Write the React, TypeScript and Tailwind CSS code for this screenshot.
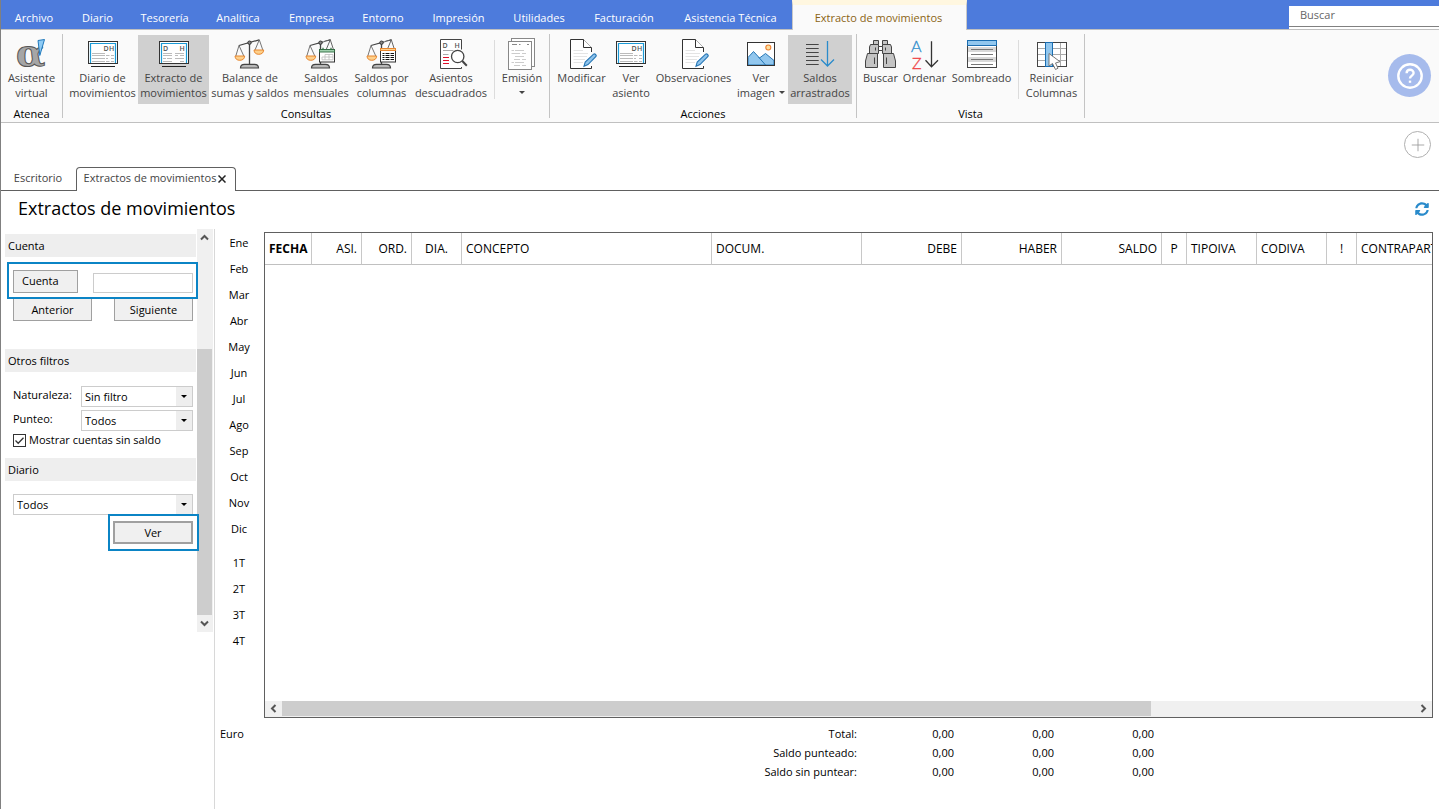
import { useState } from 'react';
import type { ReactNode } from 'react';
import { Plus } from 'lucide-react';
import { FaSyncAlt } from 'react-icons/fa';

const Icon = ({ children }: { children: ReactNode }) => (
  <svg className="w-8 h-8 shrink-0 overflow-visible" viewBox="0 -1 32 32" fill="none" aria-hidden="true">
    {children}
  </svg>
);

const Screen = ({ children }: { children: ReactNode }) => (
  <Icon>
    <rect x="1.5" y="2.5" width="29" height="22" fill="#fff" stroke="#333" strokeWidth="1" />
    <path d="M3.5 24V4.5H28.5V24" stroke="#1a9ad6" strokeWidth="1.2" />
    <path d="M4 27.5H28" stroke="#222" strokeWidth="1" />
    {children}
  </Icon>
);

const JournalIcon = () => (
  <Screen>
    <text x="16.5" y="12" fontSize="7" fontWeight="600" fill="#555">D</text>
    <text x="22" y="12" fontSize="7" fontWeight="600" fill="#555">H</text>
    <path d="M5 14.5H18M5 16.5H18M5 19.5H18M5 22.5H18M19 16.5H22.5M19 22.5H22.5M24 19.5H27M19 19.5H21M24 16.5H27M24 22.5H27" stroke="#bbb" />
  </Screen>
);

const ExtractIcon = () => (
  <Screen>
    <text x="5" y="12" fontSize="7" fontWeight="600" fill="#555">D</text>
    <text x="21.5" y="12" fontSize="7" fontWeight="600" fill="#555">H</text>
    <path d="M5 14.5H14M5 16.5H14M5 19.5H8M9 19.5H14M5 22.5H14M17 14.5H26M17 16.5H20M22 16.5H26M17 19.5H26M22 22.5H26" stroke="#bbb" />
  </Screen>
);

const Scale = ({ children }: { children?: ReactNode }) => (
  <Icon>
    <path d="M15.5 5V25" stroke="#444" strokeWidth="1.3" />
    <path d="M5 6.5L25.3 .8" stroke="#444" strokeWidth="1.2" />
    <path d="M5 6.5L1.8 17M5 6.5L9.8 17M25.3 .8L21 11M25.3 .8L28.8 11" stroke="#666" strokeWidth=".9" />
    <circle cx="15.5" cy="3.7" r="1.7" fill="#888" stroke="#333" />
    <path d="M1 17H10.7C10.5 19.8 8.8 21.3 5.8 21.3S1.2 19.8 1 17Z" fill="#fdd08b" stroke="#e8862e" />
    <path d="M20 11H29.7C29.5 13.8 27.8 15.3 24.8 15.3S20.2 13.8 20 11Z" fill="#fdd08b" stroke="#e8862e" />
    <path d="M6.5 29C6.5 26.5 8 25.3 10.5 25.3H20.5C23 25.3 24.5 26.5 24.5 29Z" fill="#b9b9b9" stroke="#444" strokeWidth="1.2" />
    {children}
  </Icon>
);

const CalendarScaleIcon = () => (
  <Scale>
    <path d="M18 9V2H30V18H18Z" fill="#fafafa" />
    <path d="M18 3L25.3 .8M25.3 .8L21 11M25.3 .8L28.3 10" stroke="#666" />
    <rect x="14.5" y="10.5" width="15" height="12.5" fill="#fff" stroke="#333" />
    <rect x="14.5" y="10.5" width="15" height="2.5" fill="#9fd0ad" stroke="#2f6b40" strokeWidth=".9" />
    <path d="M18 8.8V11M26 8.8V11" stroke="#2f6b40" strokeWidth="1.2" />
    <path d="M20 15.5H28M17 18H28M17 20.8H28M17 18V20.8M20 15.5V20.8M24 15.5V20.8M28 15.5V20.8" stroke="#bbb" strokeWidth=".8" />
  </Scale>
);

const ColumnsScaleIcon = () => (
  <Scale>
    <path d="M18 9V2H30V18H18Z" fill="#fafafa" />
    <path d="M18 3L25.3 .8M25.3 .8L21.5 10M25.3 .8L28.3 10" stroke="#666" />
    <rect x="14.5" y="9.5" width="15" height="13.5" fill="#fff" stroke="#333" />
    <rect x="14.5" y="9.5" width="15" height="2" fill="#fdd08b" stroke="#e8862e" />
    <path d="M16.5 14.5H18.5M16.5 16.5H18.5M16.5 18.5H18.5M16.5 20.5H18.5M19.5 14.5H23.5M19.5 16.5H23.5M19.5 18.5H23.5M19.5 20.5H23.5M24.5 14.5H28M24.5 16.5H28M24.5 18.5H28M24.5 20.5H28" stroke="#111" />
  </Scale>
);

const UnbalancedIcon = () => (
  <Icon>
    <path d="M26.5 10.5V.5H5.5V29.5H26.5V28" fill="#fff" stroke="#444" />
    <text x="7.5" y="8.5" fontSize="7" fontWeight="600" fill="#555">D</text>
    <text x="19.5" y="8.5" fontSize="7" fontWeight="600" fill="#555">H</text>
    <path d="M8 11.5H18.5M8 15.5H13.5" stroke="#aaa" />
    <path d="M8 18.5H14M8 21.5H14M8 24.5H14" stroke="#e0112b" />
    <circle cx="22.7" cy="17.5" r="6.2" fill="#fff" stroke="#444" strokeWidth="1.3" />
    <path d="M27.3 22L31.8 26.8" stroke="#444" strokeWidth="2" />
  </Icon>
);

const PrintIcon = () => (
  <Icon>
    <rect x="5.5" y="-.5" width="23" height="28" fill="#fff" stroke="#888" />
    <rect x="2.5" y="2.5" width="23" height="28" fill="#fff" stroke="#888" />
    <path d="M6 5.5H11M13 5.5H14.5M21 5.5H23" stroke="#888" />
    <path d="M5.5 11.5H8M9 11.5H18M5.5 14.5H14M16 14.5H20M9 17.5H18M8 20.5H14M16 20.5H20M5.5 23.5H8M9 23.5H18M8 26.5H14M16 26.5H20" stroke="#ccc" />
  </Icon>
);

const EditIcon = () => (
  <Icon>
    <path d="M25.5 13V8.7L17.3.5H4.5V29.5H25.5V27" fill="#fff" stroke="#333" />
    <path d="M17.5.5V8.5H25.5" fill="#fff" stroke="#333" />
    <path d="M7.5 11.5H17M7.5 14.5H22M7.5 17.5H21M7.5 20.5H19M7.5 23.5H17" stroke="#e4e4e4" />
    <path d="M18 27.2L19.2 23L27.6 15.2C28.8 14.2 31 16.2 30 17.5L22 25.6Z" fill="#8fc4ec" stroke="#2676b5" strokeWidth="1.1" />
  </Icon>
);

const ImageIcon = () => (
  <Icon>
    <rect x="2.5" y="3.5" width="27" height="23" fill="#fff" />
    <path d="M3 18.5L8.5 12.5L14.5 19L20.5 14.5L29 21.5V26H3Z" fill="#92c7ee" stroke="#2676b5" />
    <path d="M13.5 18L20.5 26" stroke="#2676b5" />
    <rect x="2.5" y="3.5" width="27" height="23" stroke="#333" />
    <circle cx="23.3" cy="8.5" r="2.5" fill="#fde0a0" stroke="#ee8130" strokeWidth="1.1" />
  </Icon>
);

const CarryIcon = () => (
  <Icon>
    <path d="M2 5.5H14.7M2 9.5H14.7M2 13.5H14.7M2 17.5H14.7M2 21.5H14.7M2 25.5H14.7" stroke="#444" />
    <path d="M23.5 2V27.3M17 20.5L23.5 27L30 20.5" stroke="#2a8bcb" strokeWidth="1.3" />
  </Icon>
);

const BinocularsIcon = () => (
  <Icon>
    <g fill="#c4c4c4" stroke="#444">
      <path d="M8.5 1.5H13.5V5.5H8.5ZM17.5 1.5H22.5V5.5H17.5Z" />
      <path d="M5.5 5.5H13.5V14.5H4.5V8Z" />
      <path d="M17.5 5.5H25.5L26.5 8V14.5H17.5Z" />
      <path d="M13.5 7.5H17.5V11.5H13.5Z" fill="#fff" />
      <path d="M2.5 14.5H12.5V28.5H.5V22Z" />
      <path d="M18.5 14.5H28.5L30.5 22V28.5H18.5Z" />
      <path d="M9.5 18.5V25M21.5 18.5V25M10.5 8.5V11.5M20.5 8.5V11.5" />
    </g>
  </Icon>
);

const SortIcon = () => (
  <Icon>
    <g className="font-['Lato'] font-light">
      <text x="2" y="12.5" fontSize="16" fill="#2a8bcb" stroke="#2a8bcb" strokeWidth=".3">A</text>
      <text x="3" y="29.5" fontSize="16" fill="#ef3e42" stroke="#ef3e42" strokeWidth=".3">Z</text>
    </g>
    <path d="M22.5 2.3V27.8M16.5 21.3L22.5 27.7L29 21.3" stroke="#333" strokeWidth="1.3" />
  </Icon>
);

const ShadeIcon = () => (
  <Icon>
    <rect x="1.5" y="1.5" width="29" height="27" fill="#fff" stroke="#444" />
    <path d="M2 8H30V13H2ZM2 18H30V23H2Z" fill="#d9d9d9" />
    <path d="M5 10.5H27M5 15.5H27M5 20.5H27M5 25.5H27" stroke="#777" />
    <rect x="1.5" y="1.5" width="29" height="5" fill="#92c7ee" stroke="#1b6db0" />
  </Icon>
);

const ResetColumnsIcon = () => (
  <Icon>
    <rect x="1.5" y="3.5" width="29" height="24" fill="#fff" stroke="#444" />
    <path d="M2 9.5H30M2 15.5H30M2 21.5H30M24.5 4V27" stroke="#aaa" />
    <rect x="9.5" y="3.5" width="7" height="24" fill="#92c7ee" stroke="#1b6db0" />
    <path d="M13 14.5L13 27L16.5 24.5L19.5 30.5L22 29.2L19.5 24L24 22.7Z" fill="#fff" stroke="#777" />
  </Icon>
);

const AlphaIcon = () => (
  <Icon>
    <text x="0" y="27" fontSize="38" fill="#a6a6a6" stroke="#555" className="font-['DejaVu_Serif'] font-bold">α</text>
    <path d="M22 1.5L28.5 .5L23.8 16.5Z" fill="#8ecbf5" stroke="#1f78bb" />
  </Icon>
);

type Tool = {
  icon: () => ReactNode;
  lines: string[];
  width: string;
  active?: boolean;
  menu?: boolean;
  split?: boolean;
};

const groups: { name: string; tools: Tool[] }[] = [
  { name: 'Atenea', tools: [{ icon: AlphaIcon, lines: ['Asistente', 'virtual'], width: 'w-[53px]' }] },
  {
    name: 'Consultas',
    tools: [
      { icon: JournalIcon, lines: ['Diario de', 'movimientos'], width: 'w-[71px]' },
      { icon: ExtractIcon, lines: ['Extracto de', 'movimientos'], width: 'w-[71px]', active: true },
      { icon: Scale, lines: ['Balance de', 'sumas y saldos'], width: 'w-[82px]' },
      { icon: CalendarScaleIcon, lines: ['Saldos', 'mensuales'], width: 'w-[60px]' },
      { icon: ColumnsScaleIcon, lines: ['Saldos por', 'columnas'], width: 'w-[61px]' },
      { icon: UnbalancedIcon, lines: ['Asientos', 'descuadrados'], width: 'w-[78px]' },
      { icon: PrintIcon, lines: ['Emisión', ''], width: 'w-[46px]', menu: true, split: true },
    ],
  },
  {
    name: 'Acciones',
    tools: [
      { icon: EditIcon, lines: ['Modificar'], width: 'w-[55px]' },
      { icon: JournalIcon, lines: ['Ver', 'asiento'], width: 'w-[44px]' },
      { icon: EditIcon, lines: ['Observaciones'], width: 'w-[81px]' },
      { icon: ImageIcon, lines: ['Ver', 'imagen'], width: 'w-[54px]', menu: true },
      { icon: CarryIcon, lines: ['Saldos', 'arrastrados'], width: 'w-[64px]', active: true },
    ],
  },
  {
    name: 'Vista',
    tools: [
      { icon: BinocularsIcon, lines: ['Buscar'], width: 'w-[39px]' },
      { icon: SortIcon, lines: ['Ordenar'], width: 'w-[49px]' },
      { icon: ShadeIcon, lines: ['Sombreado'], width: 'w-[65px]' },
      { icon: ResetColumnsIcon, lines: ['Reiniciar', 'Columnas'], width: 'w-[57px]', split: true },
    ],
  },
];

const menus = [
  { label: 'Archivo', width: 'w-[66px]' },
  { label: 'Diario', width: 'w-[61px]' },
  { label: 'Tesorería', width: 'w-[73px]' },
  { label: 'Analítica', width: 'w-[74px]' },
  { label: 'Empresa', width: 'w-[73px]' },
  { label: 'Entorno', width: 'w-[70px]' },
  { label: 'Impresión', width: 'w-[81px]' },
  { label: 'Utilidades', width: 'w-[80px]' },
  { label: 'Facturación', width: 'w-[90px]' },
  { label: 'Asistencia Técnica', width: 'w-[123px]' },
];

const columns = [
  { label: 'FECHA', style: 'w-[47px] font-bold text-center' },
  { label: 'ASI.', style: 'w-[50px] text-right' },
  { label: 'ORD.', style: 'w-[50px] text-right' },
  { label: 'DIA.', style: 'w-[50px] text-center' },
  { label: 'CONCEPTO', style: 'w-[250px] text-left' },
  { label: 'DOCUM.', style: 'w-[150px] text-left' },
  { label: 'DEBE', style: 'w-[100px] text-right' },
  { label: 'HABER', style: 'w-[100px] text-right' },
  { label: 'SALDO', style: 'w-[100px] text-right' },
  { label: 'P', style: 'w-[25px] text-center' },
  { label: 'TIPOIVA', style: 'w-[70px] text-left' },
  { label: 'CODIVA', style: 'w-[70px] text-left' },
  { label: '!', style: 'w-[30px] text-center' },
  { label: 'CONTRAPART', style: 'text-left' },
];

const months = ['Ene', 'Feb', 'Mar', 'Abr', 'May', 'Jun', 'Jul', 'Ago', 'Sep', 'Oct', 'Nov', 'Dic'];
const quarters = ['1T', '2T', '3T', '4T'];
const totals = ['Total:', 'Saldo punteado:', 'Saldo sin puntear:'];

const Caret = () => <span className="border-x-[3px] border-x-transparent border-t-[3px] border-t-current" />;

const Chevron = ({ d }: { d: string }) => (
  <svg className="w-[9px] h-[9px]" viewBox="0 0 9 9" fill="none" stroke="#555" strokeWidth="2" aria-hidden="true">
    <path d={d} />
  </svg>
);

const ToolButton = ({ tool }: { tool: Tool }) => (
  <>
    {tool.split && <span className="w-px h-[59px] mt-[5px] mx-1 bg-[#dcdcdc]" />}
    <button
      type="button"
      className={`${tool.width} h-[69px] pt-[3px] flex flex-col items-center leading-[15px] whitespace-nowrap text-[#444] ${
        tool.active ? 'bg-[#d0d0d0]' : ''
      }`}
    >
      <tool.icon />
      {tool.lines.map((line, i) => (
        <span key={i} className="h-[15px] flex items-center gap-1">
          {line}
          {tool.menu && i === tool.lines.length - 1 && <Caret />}
        </span>
      ))}
    </button>
  </>
);

const SectionTitle = ({ children }: { children: ReactNode }) => (
  <h2 className="h-[23px] mr-px pt-px pl-[3px] bg-[#eee] flex items-center">{children}</h2>
);

const Select = ({ id, value, label }: { id: string; value: string; label?: string }) => (
  <div className="relative flex-1 h-[21px]">
    <select
      id={id}
      aria-label={label}
      className="appearance-none w-full h-full pt-px pl-[3px] bg-white border border-[#ccc] rounded-none"
    >
      <option>{value}</option>
    </select>
    <span className="absolute right-px inset-y-px w-4 flex items-center justify-center bg-[#eee] pointer-events-none">
      <Caret />
    </span>
  </div>
);

const grayButton = 'h-[23px] pt-px bg-[#f0f0f0] border border-[#a0a0a0] flex items-center justify-center';

const App = () => {
  const [showEmpty, setShowEmpty] = useState(true);

  return (
    <div className="min-h-screen flex flex-col border-l border-[#808080] bg-white text-black text-[11px] font-['Open_Sans','Noto_Sans',sans-serif]">
      {/* Menu bar */}
      <header className="h-[30px] flex bg-[#4d7bdc] border-b border-[#c0c0c0]">
        <nav className="flex h-full">
          {menus.map((menu) => (
            <a
              key={menu.label}
              href="#"
              className={`${menu.width} pt-[7px] flex items-center justify-center whitespace-nowrap text-white`}
            >
              {menu.label}
            </a>
          ))}
          <a
            href="#"
            className="w-[175px] h-[30px] pt-px pr-[2px] border-t-[5px] border-t-[#fff7e0] border-x border-x-[#c8c8c8] bg-[#fafafa] flex items-center justify-center whitespace-nowrap text-[#8a6414]"
          >
            Extracto de movimientos
          </a>
        </nav>
        <div className="ml-auto pt-[6px]">
          <div className="w-[150px] h-[23px] bg-white">
            <input
              type="text"
              aria-label="Buscar"
              placeholder="Buscar"
              className="block w-full h-[21px] pl-[11px] pb-[3px] border-b border-[#808080] outline-none placeholder:text-[#666]"
            />
          </div>
        </div>
      </header>

      {/* Ribbon */}
      <div className="h-[93px] flex bg-[#fafafa] border-b border-[#c0c0c0]">
        {groups.map((group) => (
          <section key={group.name} className="flex">
            <div className="pt-[5px] px-1 flex flex-col">
              <div className="flex">
                {group.tools.map((tool, i) => (
                  <ToolButton key={i} tool={tool} />
                ))}
              </div>
              <h2 className="h-5 pt-[2px] flex items-center justify-center">{group.name}</h2>
            </div>
            <span className="w-px h-[84px] mt-1 bg-[#c4c4c4]" />
          </section>
        ))}
        <button
          type="button"
          aria-label="Ayuda"
          className="ml-auto mr-2 mt-6 w-[43px] h-[43px] rounded-full bg-[#a6bbec] flex items-center justify-center"
        >
          <svg className="w-[26px] h-[26px]" viewBox="0 0 26 26" fill="none" stroke="#fff" strokeWidth="2.4" aria-hidden="true">
            <circle cx="13" cy="13" r="11.7" />
            <path d="M9.6 10.3C9.6 5.6 16.6 5.8 16.6 10C16.6 12.6 13 12.6 13 15.5" />
            <path d="M13 17.6V19.8" />
          </svg>
        </button>
      </div>

      {/* Open windows */}
      <div className="h-[68px] pt-2 flex flex-col justify-between border-b border-[#606060]">
        <button
          type="button"
          aria-label="Nueva pestaña"
          className="self-end mr-2 w-[27px] h-[27px] rounded-full border border-[#b0b0b0] text-[#999] flex items-center justify-center"
        >
          <Plus className="w-5 h-5" strokeWidth={1} />
        </button>
        <div className="flex h-6 -mb-px text-[#444]">
          <a href="#" className="w-[75px] pb-px pr-px flex items-center justify-center">Escritorio</a>
          <div className="w-[160px] pb-[2px] pr-[2px] border border-b-0 border-[#606060] rounded-t-[4px] bg-white flex items-center justify-center gap-[2px] whitespace-nowrap">
            <a href="#">Extractos de movimientos</a>
            <button type="button" aria-label="Cerrar" className="text-[#222]">
              <svg className="w-2 h-2" viewBox="0 0 8 8" stroke="currentColor" strokeWidth="1.5" aria-hidden="true">
                <path d="M.5 .5L7.5 7.5M7.5 .5L.5 7.5" />
              </svg>
            </button>
          </div>
        </div>
      </div>

      <div className="h-[38px] pb-[2px] pl-[17px] pr-[10px] flex items-center justify-between">
        <h1 className="pb-[2px] text-[18px] leading-6">Extractos de movimientos</h1>
        <button type="button" aria-label="Actualizar" className="text-[#2a8bcb]">
          <FaSyncAlt className="w-[14px] h-[14px]" />
        </button>
      </div>

      <main className="flex-1 flex">
        {/* Filters */}
        <aside className="w-[214px] shrink-0 flex items-start border-r border-[#d8d8d8]">
          <form className="w-[192px] ml-1 pt-[5px]" onSubmit={(e) => e.preventDefault()}>
            <SectionTitle>Cuenta</SectionTitle>
            <div className="relative h-[37px] mt-[5px] ml-[2px] -mr-px pt-px pl-1 pr-[3px] border-2 border-[#0b84c5] bg-white flex items-center justify-between">
              <button type="button" className="w-[65px] h-[23px] pt-px pl-2 bg-[#f0f0f0] border border-[#a0a0a0] text-left">
                Cuenta
              </button>
              <input type="text" aria-label="Cuenta" className="w-[100px] h-5 mt-1 px-1 border border-[#ccc] outline-none" />
            </div>
            <div className="-mt-px ml-2 mr-1 flex justify-between">
              <button type="button" className={`w-[79px] ${grayButton}`}>Anterior</button>
              <button type="button" className={`w-[79px] ${grayButton}`}>Siguiente</button>
            </div>

            <div className="mt-7">
              <SectionTitle>Otros filtros</SectionTitle>
            </div>
            <div className="mt-[14px] ml-2 mr-1 flex flex-col gap-[3px]">
              <div className="flex">
                <label htmlFor="naturaleza" className="w-[68px] pt-px">Naturaleza:</label>
                <Select id="naturaleza" value="Sin filtro" />
              </div>
              <div className="flex">
                <label htmlFor="punteo" className="w-[68px] pt-px">Punteo:</label>
                <Select id="punteo" value="Todos" />
              </div>
            </div>
            <label className="mt-[2px] ml-2 h-[14px] flex items-center gap-[3px] whitespace-nowrap">
              <span className="relative w-[13px] h-[13px] shrink-0 flex">
                <input
                  type="checkbox"
                  checked={showEmpty}
                  onChange={(e) => setShowEmpty(e.target.checked)}
                  className="peer appearance-none w-full h-full border border-[#333] bg-white"
                />
                <svg className="absolute inset-0 hidden peer-checked:block pointer-events-none" viewBox="0 0 13 13" fill="none" stroke="#333" strokeWidth="1.3" aria-hidden="true">
                  <path d="M2.5 6.5L5.2 9.2L10.5 3.7" />
                </svg>
              </span>
              Mostrar cuentas sin saldo
            </label>

            <div className="mt-[11px]">
              <SectionTitle>Diario</SectionTitle>
            </div>
            <div className="mt-[13px] ml-2 mr-1 flex">
              <Select id="diario" value="Todos" label="Diario" />
            </div>
            <div className="relative w-[91px] h-[37px] -mt-px ml-auto -mr-[2px] border-2 border-[#0b84c5] bg-white flex items-center justify-center">
              <button type="submit" className="w-20 h-[23px] mr-px pt-px bg-[#f0f0f0] border-2 border-[#a0a0a0] flex items-center justify-center">
                Ver
              </button>
            </div>
          </form>
          <div className="w-4 h-[403px] pr-px flex flex-col items-center bg-[#f0f0f0]">
            <button type="button" aria-label="Subir" className="h-[17px] flex items-center">
              <Chevron d="M1 6.5L4.5 3L8 6.5" />
            </button>
            <div className="w-full h-[266px] mt-auto bg-[#cdcdcd]" />
            <button type="button" aria-label="Bajar" className="h-[17px] flex items-center">
              <Chevron d="M1 2.5L4.5 6L8 2.5" />
            </button>
          </div>
        </aside>

        <div className="flex-1 min-w-0 pt-[3px] flex flex-col">
          <div className="flex">
            <div className="w-[49px] pr-px shrink-0 flex flex-col items-center">
              {months.map((m) => (
                <button key={m} type="button" className="h-[26px] pb-1">{m}</button>
              ))}
              <div className="h-2" />
              {quarters.map((q) => (
                <button key={q} type="button" className="h-[26px] pb-1">{q}</button>
              ))}
            </div>

            {/* Entries */}
            <div className="flex-1 min-w-0 h-[486px] mr-[6px] flex flex-col border border-[#606060] overflow-hidden">
              <table className="w-full table-fixed border-separate border-spacing-0">
                <thead>
                  <tr className="h-8">
                    {columns.map((c) => (
                      <th
                        key={c.label}
                        className={`${c.style} px-1 border-b border-r border-b-[#c0c0c0] border-r-[#c8c8c8] last:border-r-0 last:pr-0 overflow-hidden whitespace-nowrap text-[12px] not-first:font-normal`}
                      >
                        {c.label}
                      </th>
                    ))}
                  </tr>
                </thead>
              </table>
              <div className="mt-auto h-4 pb-px flex bg-[#f0f0f0]">
                <button type="button" aria-label="Izquierda" className="w-[17px] flex items-center justify-center">
                  <Chevron d="M6.5 1L3 4.5L6.5 8" />
                </button>
                <div className="flex-1">
                  <div className="w-[76.7%] h-full bg-[#cdcdcd]" />
                </div>
                <button type="button" aria-label="Derecha" className="w-[17px] flex items-center justify-center">
                  <Chevron d="M2.5 1L6 4.5L2.5 8" />
                </button>
              </div>
            </div>
          </div>

          {/* Totals */}
          <div className="mt-[6px] flex items-start">
            <span className="w-[49px] pl-[5px] leading-[19px]">Euro</span>
            <table>
              <tbody>
                {totals.map((label) => (
                  <tr key={label} className="h-[19px] text-right leading-[19px]">
                    <th className="w-[593px] font-normal text-right">{label}</th>
                    <td className="w-[97px]">0,00</td>
                    <td className="w-[100px]">0,00</td>
                    <td className="w-[100px]">0,00</td>
                  </tr>
                ))}
              </tbody>
            </table>
          </div>
        </div>
      </main>
    </div>
  );
};

export default App;
